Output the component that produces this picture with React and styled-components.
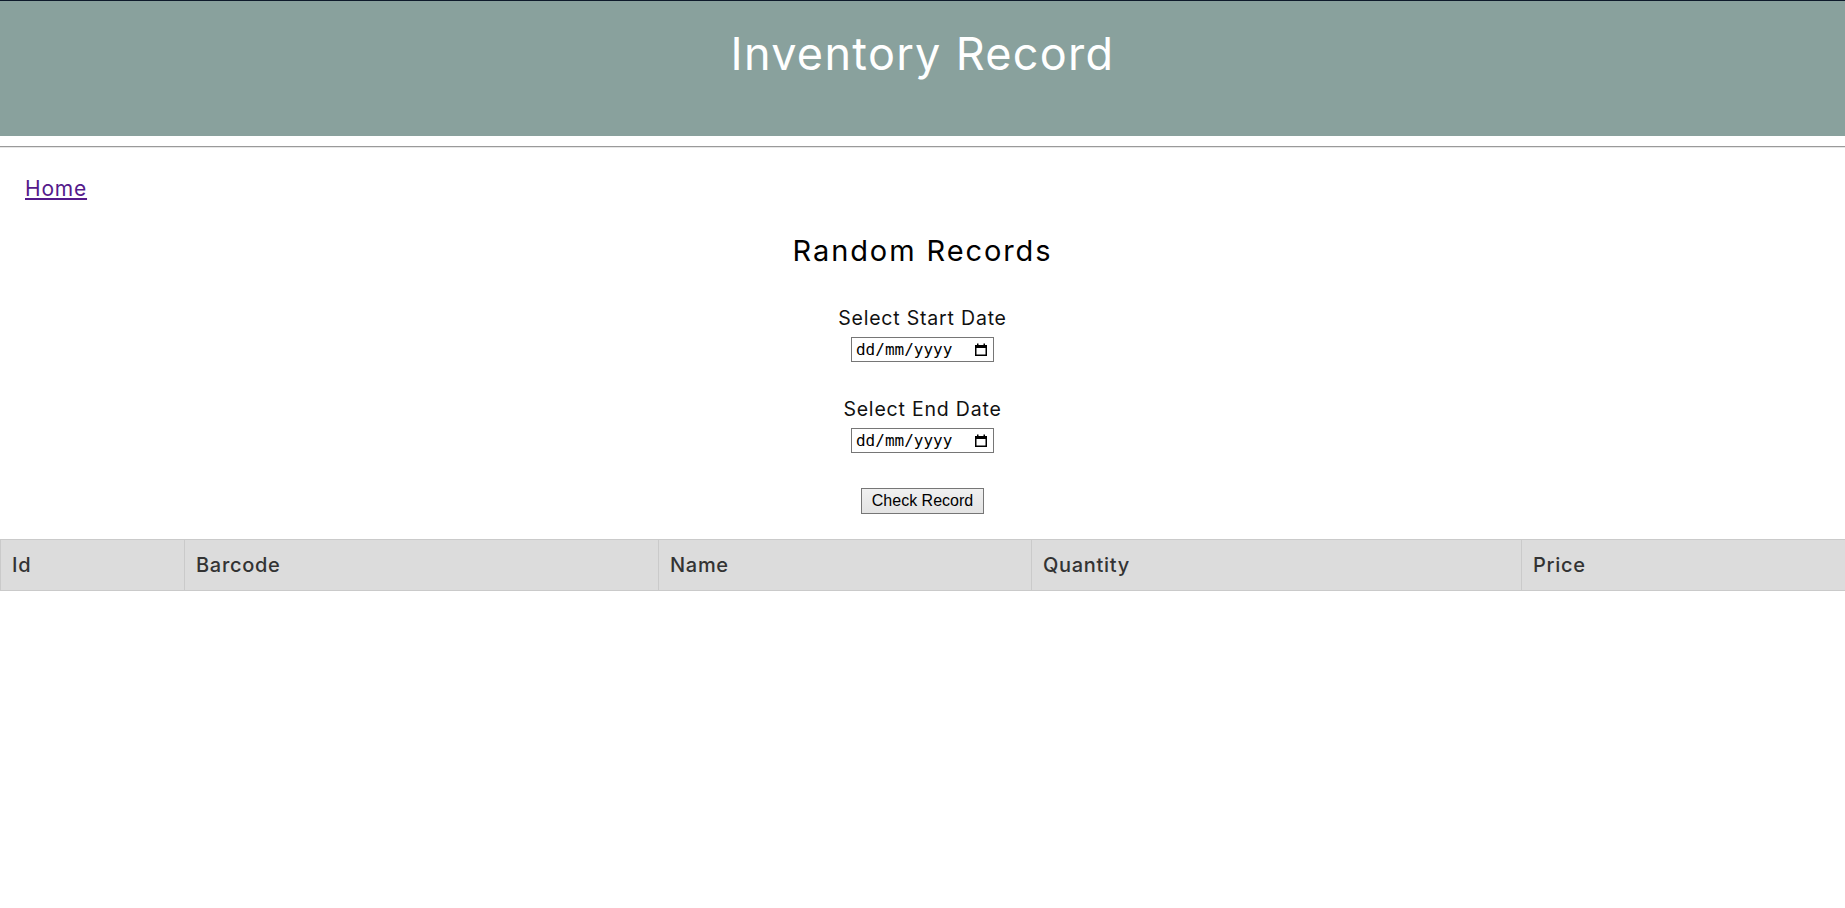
import React from "react";
import styled, { createGlobalStyle } from "styled-components";

const GlobalStyle = createGlobalStyle`
  body {
    margin: 0;
    font-family: Inter, "Open Sans", sans-serif;
    background: #fff;
  }
`;

const columns = [
  { name: "Id", width: "184px" },
  { name: "Barcode", width: "474px" },
  { name: "Name", width: "373px" },
  { name: "Quantity", width: "490px" },
  { name: "Price", width: "324px" },
];

const CalendarIcon = () => (
  <svg width="12" height="13" viewBox="0 0 12 13">
    <rect x="0.75" y="2.75" width="10.5" height="9.5" fill="none" stroke="#000" strokeWidth="1.5" />
    <rect x="0" y="2" width="12" height="3" fill="#000" />
    <rect x="2" y="0.5" width="1.5" height="2" fill="#000" />
    <rect x="8.5" y="0.5" width="1.5" height="2" fill="#000" />
  </svg>
);

const DateInput = () => (
  <DateBox>
    <DateText type="text" placeholder="dd/mm/yyyy" />
    <CalendarIcon />
  </DateBox>
);

const App = () => {
  return (
    <>
      <GlobalStyle />
      <Header>
        <Title>Inventory Record</Title>
      </Header>
      <Divider />
      <Nav>
        <HomeLink href="#">Home</HomeLink>
      </Nav>
      <Main>
        <Heading>Random Records</Heading>
        <Field>
          <FieldLabel>Select Start Date</FieldLabel>
          <DateInput />
        </Field>
        <Field>
          <FieldLabel>Select End Date</FieldLabel>
          <DateInput />
        </Field>
        <CheckButton>Check Record</CheckButton>
      </Main>
      <Table>
        <colgroup>
          {columns.map((c) => (
            <Col key={c.name} width={c.width} />
          ))}
        </colgroup>
        <thead>
          <tr>
            {columns.map((c) => (
              <Th key={c.name}>{c.name}</Th>
            ))}
          </tr>
        </thead>
        <tbody></tbody>
      </Table>
    </>
  );
};

const Header = styled.header`
  box-sizing: border-box;
  height: 136px;
  border-top: 1px solid #0e1a2b;
  background: #89a19d;
  padding-top: 26px;
  text-align: center;
`;

const Title = styled.h1`
  margin: 0;
  color: #fff;
  font-size: 45px;
  font-weight: 400;
  letter-spacing: 1.3px;
  line-height: 54px;
`;

const Divider = styled.hr`
  margin: 10px 0 0;
  height: 0;
  border: none;
  border-top: 1px solid #9a9a9a;
  border-bottom: 1px solid #e6e6e6;
`;

const Nav = styled.nav`
  padding: 29px 0 0 25px;
`;

const HomeLink = styled.a`
  font-size: 21px;
  letter-spacing: 0.8px;
  line-height: 24px;
  color: #551a8b;
`;

const Main = styled.main`
  display: flex;
  flex-direction: column;
  align-items: center;
`;

const Heading = styled.h2`
  margin: 33px 0 0;
  font-size: 29px;
  font-weight: 400;
  letter-spacing: 1.9px;
  line-height: 34px;
  color: #000;
`;

const Field = styled.div`
  display: flex;
  flex-direction: column;
  align-items: center;
  margin-top: 38px;
  & + & {
    margin-top: 35px;
  }
`;

const FieldLabel = styled.label`
  font-size: 19.5px;
  letter-spacing: 0.8px;
  line-height: 24px;
  color: #111;
  margin-bottom: 7px;
`;

const DateBox = styled.span`
  box-sizing: border-box;
  display: inline-flex;
  align-items: center;
  width: 143px;
  height: 25px;
  padding: 0 6px 0 4px;
  border: 1px solid #767676;
  background: #fff;
`;

const DateText = styled.input`
  flex: 1;
  min-width: 0;
  border: none;
  outline: none;
  padding: 0;
  background: transparent;
  font-family: "DejaVu Sans Mono", "Liberation Mono", monospace;
  font-size: 16px;
  &::placeholder {
    color: #000;
    opacity: 1;
  }
`;

const CheckButton = styled.button`
  box-sizing: border-box;
  margin-top: 35px;
  height: 26px;
  padding: 0 10px;
  border: 1px solid #767676;
  border-radius: 0;
  background: linear-gradient(#f0f0f0, #e3e3e3);
  font-family: "Liberation Sans", Arial, sans-serif;
  font-size: 16px;
  color: #000;
`;

const Table = styled.table`
  margin-top: 25px;
  width: 100%;
  border-collapse: collapse;
  table-layout: fixed;
`;

const Col = styled.col`
  width: ${(p) => p.width};
`;

const Th = styled.th`
  padding: 13px 11px;
  border: 1px solid #cacaca;
  background: #dcdcdc;
  color: #333;
  font-size: 20px;
  font-weight: 500;
  letter-spacing: 0.7px;
  line-height: 24px;
  text-align: left;
`;

export default App;
